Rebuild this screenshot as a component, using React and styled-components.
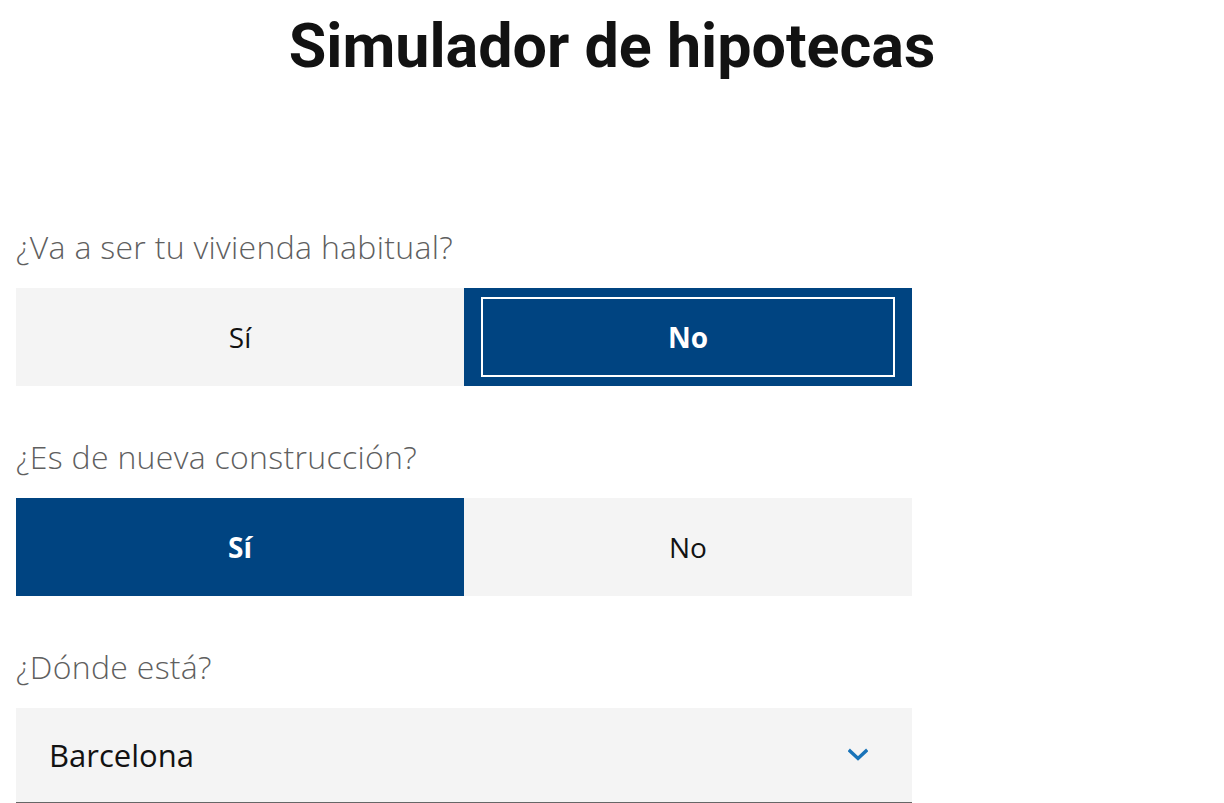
import React, { useState } from "react";
import styled, { createGlobalStyle } from "styled-components";

const GlobalStyle = createGlobalStyle`
  html, body {
    margin: 0;
    padding: 0;
    background: #ffffff;
  }
  body {
    font-family: "Open Sans", "Liberation Sans", Arial, sans-serif;
    color: #121212;
  }
`;

const Page = styled.main`
  padding: 0 16px;
`;

const Title = styled.h1`
  margin: 0;
  padding-top: 10px;
  height: 229px;
  box-sizing: border-box;
  text-align: center;
  font-family: Roboto, "Liberation Sans", Arial, sans-serif;
  font-size: 61px;
  line-height: 72px;
  font-weight: 700;
  color: #121212;
`;

const Form = styled.form`
  width: 896px;
  display: flex;
  flex-direction: column;
`;

const Field = styled.div`
  display: flex;
  flex-direction: column;
  gap: 23px;
  margin-bottom: 53px;

  &:last-child {
    margin-bottom: 0;
  }
`;

const Label = styled.span`
  font-size: 32px;
  line-height: 36px;
  font-weight: 300;
  letter-spacing: 0.3px;
  color: #5f5f5f;
`;

const Toggle = styled.div`
  display: grid;
  grid-template-columns: 1fr 1fr;
  height: 98px;
`;

const Option = styled.button`
  position: relative;
  border: none;
  margin: 0;
  padding: 0;
  font-family: inherit;
  font-size: 28px;
  font-weight: ${(p) => (p.$active ? 700 : 400)};
  color: ${(p) => (p.$active ? "#ffffff" : "#121212")};
  background: ${(p) => (p.$active ? "#004481" : "#f4f4f4")};
  cursor: pointer;
`;

const FocusRing = styled.span`
  position: absolute;
  inset: 9px 17px;
  border: 2px solid #ffffff;
  pointer-events: none;
`;

const Select = styled.div`
  height: 94px;
  background: #f4f4f4;
  border-bottom: 1px solid #666666;
  display: flex;
  align-items: center;
  justify-content: space-between;
  padding: 0 44px 0 33px;
  font-size: 31px;
  font-weight: 400;
  color: #121212;
`;

const Chevron = () => (
  <svg width="20" height="14" viewBox="0 0 20 14" aria-hidden="true">
    <path
      d="M2 3 L10 10.5 L18 3"
      fill="none"
      stroke="#1973b8"
      strokeWidth="3.4"
      strokeLinecap="square"
    />
  </svg>
);

function ToggleField({ label, value, focused, onChange }) {
  return (
    <Field>
      <Label>{label}</Label>
      <Toggle>
        {["Sí", "No"].map((opt) => (
          <Option
            key={opt}
            type="button"
            $active={value === opt}
            onClick={() => onChange(opt)}
          >
            {opt}
            {focused && value === opt && <FocusRing />}
          </Option>
        ))}
      </Toggle>
    </Field>
  );
}

export default function App() {
  const [habitual, setHabitual] = useState("No");
  const [nueva, setNueva] = useState("Sí");

  return (
    <>
      <GlobalStyle />
      <Page>
        <Title>Simulador de hipotecas</Title>
        <Form>
          <ToggleField
            label="¿Va a ser tu vivienda habitual?"
            value={habitual}
            focused
            onChange={setHabitual}
          />
          <ToggleField
            label="¿Es de nueva construcción?"
            value={nueva}
            onChange={setNueva}
          />
          <Field>
            <Label>¿Dónde está?</Label>
            <Select>
              <span>Barcelona</span>
              <Chevron />
            </Select>
          </Field>
        </Form>
      </Page>
    </>
  );
}
